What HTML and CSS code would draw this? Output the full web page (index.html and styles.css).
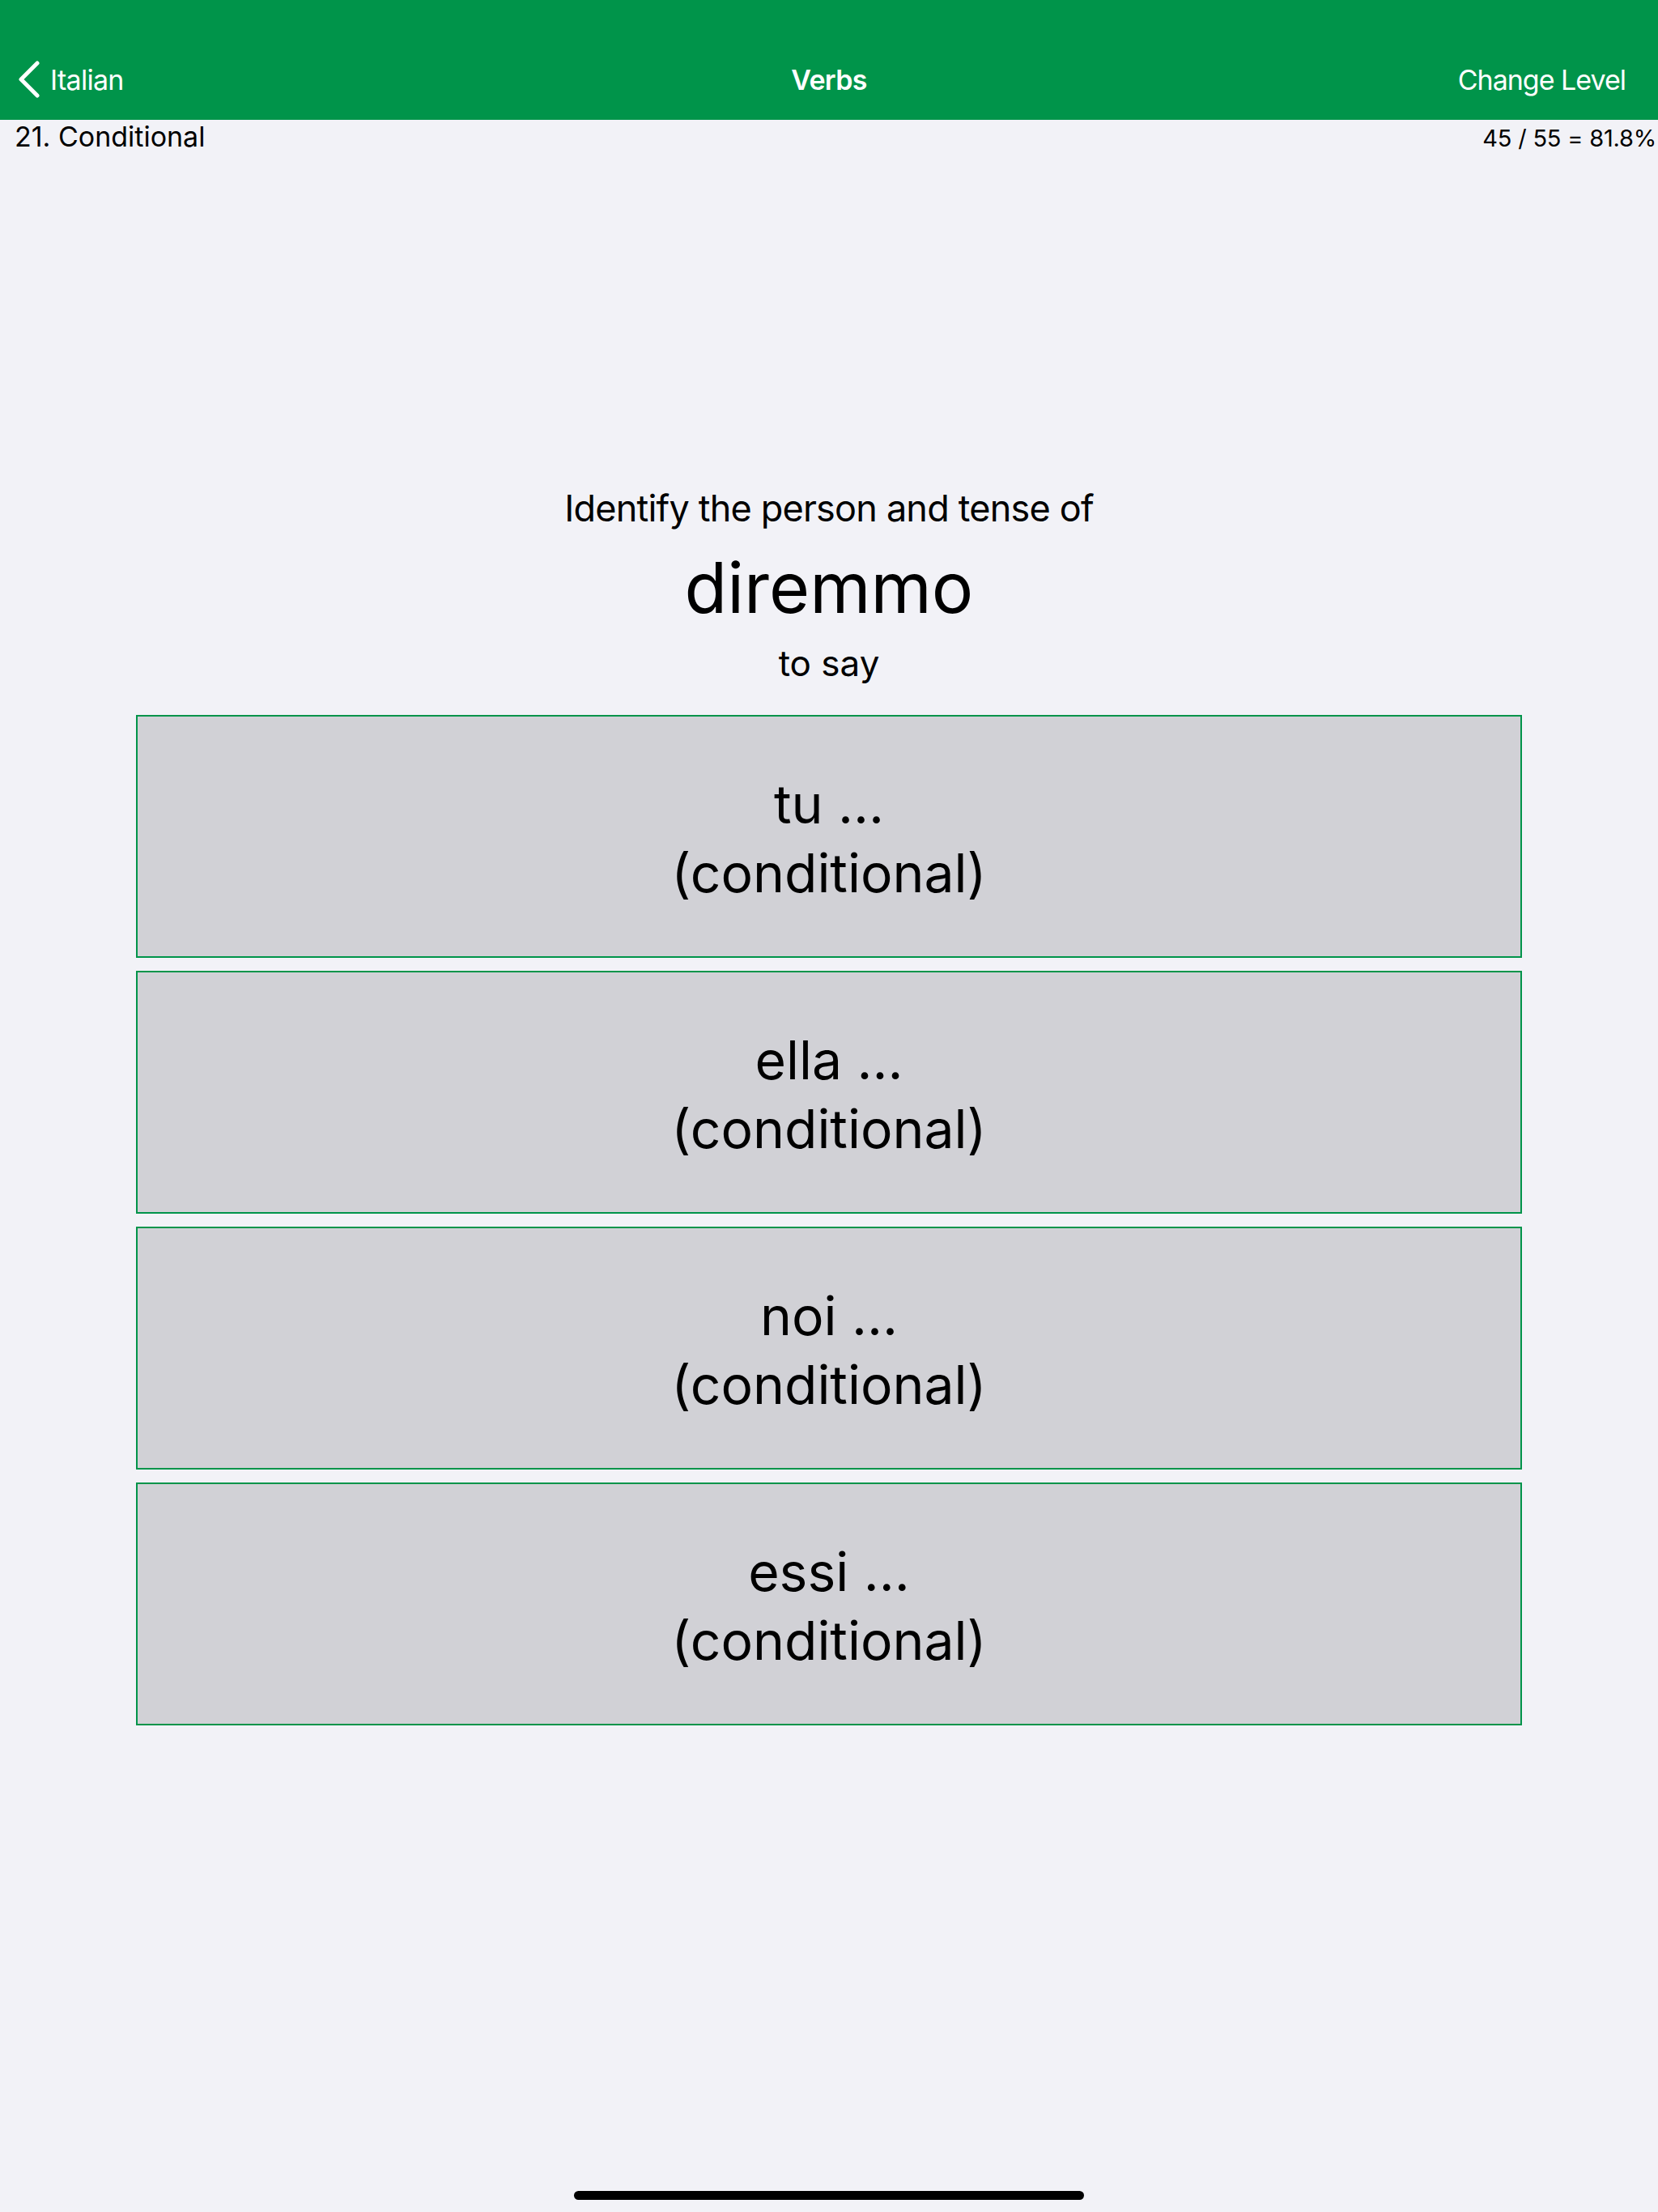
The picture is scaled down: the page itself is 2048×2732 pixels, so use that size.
FILE: index.html
```html
<!DOCTYPE html>
<html lang="en">
<head>
    <meta charset="UTF-8">
    <meta name="viewport" content="width=device-width, initial-scale=1.0">
    <title>Verbs</title>
    <link rel="stylesheet" href="styles.css">
</head>
<body>
    <div class="screen">
        <header class="nav-bar">
            <a href="#" class="nav-back">
                <svg class="chevron" width="30" height="46" viewBox="0 0 30 46">
                    <polyline points="24,3 4,23 24,43" fill="none" stroke="#fff" stroke-width="5" stroke-linecap="round" stroke-linejoin="round"/>
                </svg>
                <span>Italian</span>
            </a>
            <h1 class="nav-title">Verbs</h1>
            <a href="#" class="nav-action">Change Level</a>
        </header>

        <div class="lesson-row">
            <span class="lesson-name">21. Conditional</span>
            <span class="lesson-score">45 / 55 = 81.8%</span>
        </div>

        <main class="quiz">
            <p class="prompt">Identify the person and tense of</p>
            <p class="word">diremmo</p>
            <p class="meaning">to say</p>

            <div class="answers">
                <button class="answer">tu …<br>(conditional)</button>
                <button class="answer">ella …<br>(conditional)</button>
                <button class="answer">noi …<br>(conditional)</button>
                <button class="answer">essi …<br>(conditional)</button>
            </div>
        </main>

        <div class="home-indicator"></div>
    </div>
</body>
</html>
```

FILE: styles.css
```css
body {
    margin: 0;
    padding: 0;
    font-family: Inter, Roboto, "Noto Sans", sans-serif;
    background-color: #f2f2f7;
    color: #000;
}

.screen {
    min-height: 100vh;
    display: flex;
    flex-direction: column;
}

/* green navigation bar, status bar area included */
.nav-bar {
    background-color: #00944a;
    height: 100px;
    padding-top: 48px;
    display: flex;
    align-items: center;
    justify-content: space-between;
    position: relative;
}

.nav-back {
    display: flex;
    align-items: center;
    color: #fff;
    text-decoration: none;
    font-size: 34px;
    letter-spacing: -0.7px;
    padding-left: 22px;
}

.chevron {
    margin-right: 10px;
}

.nav-title {
    position: absolute;
    left: 0;
    right: 0;
    margin: 0;
    text-align: center;
    color: #fff;
    font-size: 34px;
    font-weight: 600;
    letter-spacing: -0.7px;
    pointer-events: none;
}

.nav-action {
    color: #fff;
    text-decoration: none;
    font-size: 34px;
    letter-spacing: -1px;
    padding-right: 40px;
}

.lesson-row {
    display: flex;
    justify-content: space-between;
    align-items: baseline;
    padding: 0 2px 0 18px;
}

.lesson-name {
    font-size: 34px;
}

.lesson-score {
    font-size: 29px;
    letter-spacing: -0.2px;
}

.quiz {
    display: flex;
    flex-direction: column;
    align-items: center;
    padding-top: 411px;
}

.prompt {
    margin: 0;
    font-size: 45px;
    line-height: 56px;
    letter-spacing: -0.8px;
}

.word {
    margin: 17px 0 0;
    font-size: 86px;
    line-height: 106px;
}

.meaning {
    margin: 13px 0 0;
    font-size: 44px;
    line-height: 54px;
}

.answers {
    margin-top: 37px;
    display: flex;
    flex-direction: column;
    gap: 16px;
}

.answer {
    width: 1712px;
    height: 300px;
    box-sizing: border-box;
    padding: 6px 0 0;
    border: 2px solid #00944a;
    background-color: #d1d1d6;
    font-family: inherit;
    font-size: 66px;
    line-height: 85px;
    color: #000;
    cursor: pointer;
}

.home-indicator {
    width: 630px;
    height: 11px;
    border-radius: 6px;
    background-color: #000;
    margin: auto auto 15px;
}
```
